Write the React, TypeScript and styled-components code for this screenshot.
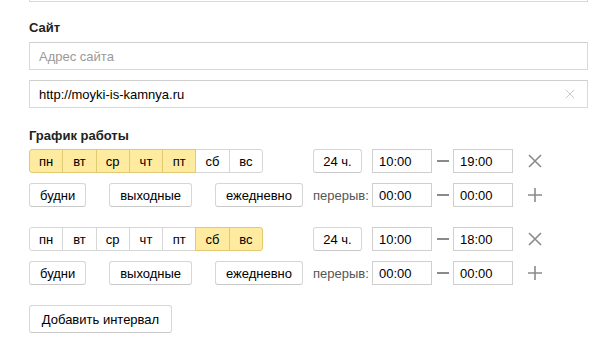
import styled, { createGlobalStyle } from 'styled-components';

const GlobalStyle = createGlobalStyle`
  html, body {
    margin: 0;
    padding: 0;
    background: #fff;
    font-family: "Liberation Sans", Arial, sans-serif;
    font-size: 13px;
    color: #000;
  }
`;

const Page = styled.div`
  width: 559px;
  padding-left: 29px;
  overflow: hidden;
  height: 342px;
`;

const Field = styled.div<{ $cut?: boolean; $first?: boolean }>`
  position: relative;
  box-sizing: border-box;
  height: 28px;
  border: 1px solid #d9d9d9;
  border-top-color: #cfcfcf;
  display: flex;
  align-items: center;
  padding: 0 9px;
  margin-top: ${(p) => (p.$cut ? '-26px' : p.$first ? '0' : '10px')};
`;

const Placeholder = styled.span`
  color: #999;
`;

const Value = styled.span`
  flex: 1;
  color: #000;
`;

const Clear = styled.span`
  display: flex;
  width: 10px;
  height: 10px;
  margin-right: 3px;
`;

const Label = styled.div<{ $top: number; $bottom: number }>`
  font-weight: bold;
  line-height: 16px;
  margin-top: ${(p) => p.$top}px;
  margin-bottom: ${(p) => p.$bottom}px;
  color: #222;
`;

const Section = styled.div``;

const Schedule = styled.div`
  display: grid;
  grid-template-columns: 274px 49px 141px 24px;
  grid-auto-rows: 24px;
  column-gap: 10px;
  row-gap: 10px;
  align-items: center;
  & + & {
    margin-top: 20px;
  }
`;

const Days = styled.div`
  display: flex;
  width: 234px;
`;

const Day = styled.button<{ $on?: boolean }>`
  box-sizing: border-box;
  height: 24px;
  flex: 1;
  margin: 0 0 0 -1px;
  padding: 0;
  font: inherit;
  color: #000;
  background: ${(p) => (p.$on ? '#ffeba0' : '#fff')};
  border: 1px solid ${(p) => (p.$on ? '#e3c971' : '#d6d6d6')};
  position: relative;
  z-index: ${(p) => (p.$on ? 1 : 0)};
  &:first-child {
    margin-left: 0;
    border-radius: 3px 0 0 3px;
  }
  &:last-child {
    border-radius: 0 3px 3px 0;
  }
`;

const Presets = styled.div`
  display: flex;
  justify-content: space-between;
`;

const Button = styled.button<{ $h?: number }>`
  box-sizing: border-box;
  height: ${(p) => p.$h ?? 24}px;
  padding: 0 10px;
  font: inherit;
  color: #000;
  background: #fff;
  border: 1px solid #d6d6d6;
  border-bottom-color: #c8c8c8;
  border-radius: 3px;
  white-space: nowrap;
`;

const WideButton = styled(Button)`
  width: 49px;
  padding: 0;
`;

const AddButton = styled(Button)`
  margin-top: 20px;
  width: 143px;
  padding: 0;
`;

const Caption = styled.span`
  color: #555;
  white-space: nowrap;
`;

const Range = styled.div`
  display: flex;
  align-items: center;
`;

const TimeBox = styled.div`
  box-sizing: border-box;
  width: 60px;
  height: 24px;
  border: 1px solid #cfcfcf;
  padding-left: 6px;
  display: flex;
  align-items: center;
  color: #000;
`;

const Dash = styled.span`
  width: 21px;
  display: flex;
  justify-content: center;
  &::before {
    content: '';
    width: 12px;
    height: 2px;
    background: #8a8a8a;
  }
`;

const IconCell = styled.span`
  display: flex;
  justify-content: center;
  align-items: center;
`;

const CrossIcon = ({ size, color, w }: { size: number; color: string; w: number }) => (
  <svg width={size} height={size} viewBox="0 0 14 14">
    <path d="M1 1L13 13M13 1L1 13" stroke={color} strokeWidth={w} fill="none" />
  </svg>
);

const PlusIcon = () => (
  <svg width={16} height={16} viewBox="0 0 16 16">
    <path d="M8 1V15M1 8H15" stroke="#8a8a8a" strokeWidth={1.6} fill="none" />
  </svg>
);

const dayNames = ['пн', 'вт', 'ср', 'чт', 'пт', 'сб', 'вс'];

const Interval = ({ active, from, to }: { active: number[]; from: string; to: string }) => (
  <Schedule>
    <Days>
      {dayNames.map((d, i) => (
        <Day key={d} $on={active.includes(i)}>
          {d}
        </Day>
      ))}
    </Days>
    <WideButton>24 ч.</WideButton>
    <Range>
      <TimeBox>{from}</TimeBox>
      <Dash />
      <TimeBox>{to}</TimeBox>
    </Range>
    <IconCell>
      <CrossIcon size={14} color="#8a8a8a" w={1.6} />
    </IconCell>
    <Presets>
      <Button>будни</Button>
      <Button>выходные</Button>
      <Button>ежедневно</Button>
    </Presets>
    <Caption>перерыв:</Caption>
    <Range>
      <TimeBox>00:00</TimeBox>
      <Dash />
      <TimeBox>00:00</TimeBox>
    </Range>
    <IconCell>
      <PlusIcon />
    </IconCell>
  </Schedule>
);

export default function App() {
  return (
    <>
      <GlobalStyle />
      <Page>
        <Field $cut />
        <Section>
          <Label $top={18} $bottom={6}>Сайт</Label>
          <Field $first>
            <Placeholder>Адрес сайта</Placeholder>
          </Field>
          <Field>
            <Value>http://moyki-is-kamnya.ru</Value>
            <Clear>
              <CrossIcon size={10} color="#c4c4c4" w={1.3} />
            </Clear>
          </Field>
        </Section>
        <Section>
          <Label $top={20} $bottom={5}>График работы</Label>
          <Interval active={[0, 1, 2, 3, 4]} from="10:00" to="19:00" />
          <Interval active={[5, 6]} from="10:00" to="18:00" />
        </Section>
        <AddButton $h={28}>Добавить интервал</AddButton>
      </Page>
    </>
  );
}
